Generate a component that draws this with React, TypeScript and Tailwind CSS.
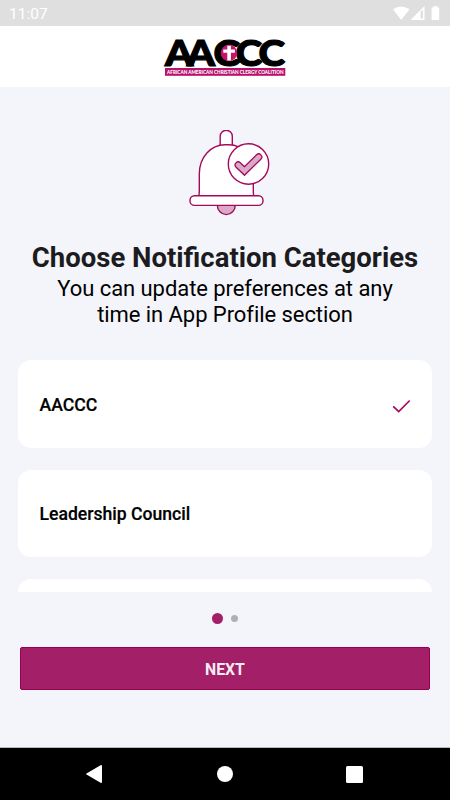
type Category = {
  name: string;
  selected: boolean;
};

const categories: Category[] = [
  { name: "AACCC", selected: true },
  { name: "Leadership Council", selected: false },
];

function StatusBar() {
  return (
    <div className="flex h-[26px] shrink-0 items-center justify-between bg-[#dfdfdf] pl-[9px] pr-[8px] text-white">
      <span className="pt-[3px] text-[15.5px] leading-none">11:07</span>
      <svg width="50" height="26" viewBox="0 0 50 26" fill="currentColor">
        <path d="M1 9.2Q9 3.8 17.5 9.2L9.2 20Z" />
        <path fillRule="evenodd" d="M32.5 6V20H18.5ZM28.6 11.5V18.4H31V9.8Z" />
        <path d="M41.5 7.6V6h4v1.6h1.7V20h-7.6V7.6Z" />
      </svg>
    </div>
  );
}

function Logo() {
  return (
    <svg
      width="122"
      height="40"
      viewBox="0 0 122 40"
      className="overflow-visible font-['Lato','Liberation_Sans',sans-serif]"
      role="img"
      aria-label="AACCC"
    >
      <text
        x="1 20.6 45 65 86"
        y="29"
        fontSize="36.5"
        fontWeight="900"
        fill="#000"
        stroke="#000"
        strokeWidth="1.2"
        transform="scale(1.1 1)"
      >
        AACCC
      </text>
      <circle cx="65" cy="16" r="8.2" fill="#c4146c" />
      <path d="M63.3 8.8h3.6v3.8h4v3.1h-4v7.8h-3.6v-7.8h-4v-3.1h4Z" fill="#fff" />
      <rect x="1" y="31" width="120.3" height="7.8" fill="#b8116b" />
      <text x="3" y="36.9" fontSize="5.2" fontWeight="900" fill="#fff" textLength="116.5" lengthAdjust="spacingAndGlyphs">
        AFRICAN AMERICAN CHRISTIAN CLERGY COALITION
      </text>
    </svg>
  );
}

function BellIcon() {
  return (
    <svg width="82" height="88" viewBox="0 0 82 88" fill="#fff" stroke="#a30a5c" strokeWidth="1.4">
      <path d="M31.2 17.5V6.3a6 6 0 0 1 12.1 0V17.5" />
      <path d="M9.8 66Q10.3 64 10.3 61V44C10.3 27 22 14.7 36 14.7H40C54 14.7 64.3 28 64.3 44V61Q64.3 64 64.8 66Z" />
      <path d="M28.3 75.2a9 9.4 0 0 0 18 0Z" fill="#dba8c8" />
      <rect x="1" y="65.7" width="73" height="9.7" rx="4.5" />
      <circle cx="59.5" cy="34" r="20.2" />
      <path d="M49.2 35L55.5 41L69.7 27" fill="none" strokeWidth="7.4" strokeLinecap="round" />
      <path d="M49.2 35L55.5 41L69.7 27" fill="none" stroke="#dba8c8" strokeWidth="4.8" strokeLinecap="round" />
    </svg>
  );
}

function CategoryCard({ category }: { category: Category }) {
  return (
    <div className="flex h-[87.5px] shrink-0 items-center justify-between rounded-[13px] bg-white pl-[21.5px] pr-[21px]">
      <span className="pt-[2px] text-[17.6px] font-medium text-black [-webkit-text-stroke:0.2px_#000]">{category.name}</span>
      {category.selected && (
        <svg className="mt-[4px]" width="19" height="14" viewBox="0 0 19 14" fill="none" stroke="#a30a5c" strokeWidth="1.7">
          <path d="M1.2 7.3L6.7 12.6L17.7 1.5" />
        </svg>
      )}
    </div>
  );
}

function NavigationBar() {
  return (
    <div className="flex h-[53px] shrink-0 items-center justify-between border-t border-[#b8b8bb] bg-black pl-[86px] pr-[87px]">
      <svg width="16" height="18" viewBox="0 0 16 18" fill="#fff">
        <path d="M15 0Q16 0 16 1V17Q16 18 15 18L0.5 9.6Q-0.2 9 0.5 8.4Z" />
      </svg>
      <span className="ml-[2px] size-4 rounded-full bg-white" />
      <span className="size-[17px] rounded-[1.5px] bg-white" />
    </div>
  );
}

export default function App() {
  return (
    <div className="flex h-[800px] w-[450px] flex-col overflow-hidden bg-[#f4f5fa] font-['Roboto','Liberation_Sans',sans-serif]">
      <StatusBar />
      <header className="flex h-[61px] shrink-0 justify-center bg-white pt-[11px]">
        <Logo />
      </header>
      <main className="flex grow flex-col">
        <div className="flex justify-center pr-px pt-[43px] pl-[11px]">
          <BellIcon />
        </div>
        <div className="mt-[23px] text-center">
          <h1 className="text-[27.5px] font-bold leading-[34px] text-[#1c1c20]">Choose Notification Categories</h1>
          <p className="pt-px text-[22px] leading-[26px] tracking-[-0.06px] text-black">
            You can update preferences at any
            <br />
            time in App Profile section
          </p>
        </div>
        <div className="mt-[32px] flex h-[232px] flex-col gap-[22px] overflow-hidden px-[18px]">
          {categories.map((category) => (
            <CategoryCard key={category.name} category={category} />
          ))}
          <div className="h-[87px] shrink-0 rounded-[13px] bg-white" />
        </div>
        <div className="mt-[21px] flex h-[11px] items-center justify-center gap-[8.5px]">
          <span className="size-[11px] rounded-full bg-[#a31f68]" />
          <span className="size-[7px] rounded-full bg-[#b0b0b0]" />
        </div>
        <button className="mx-5 mt-[23px] flex h-[43px] items-center justify-center rounded-[2px] border border-[#98004f] bg-[#a31f68] pt-[2px] text-[15.8px] font-bold text-[#f6edf3]">
          NEXT
        </button>
      </main>
      <NavigationBar />
    </div>
  );
}
